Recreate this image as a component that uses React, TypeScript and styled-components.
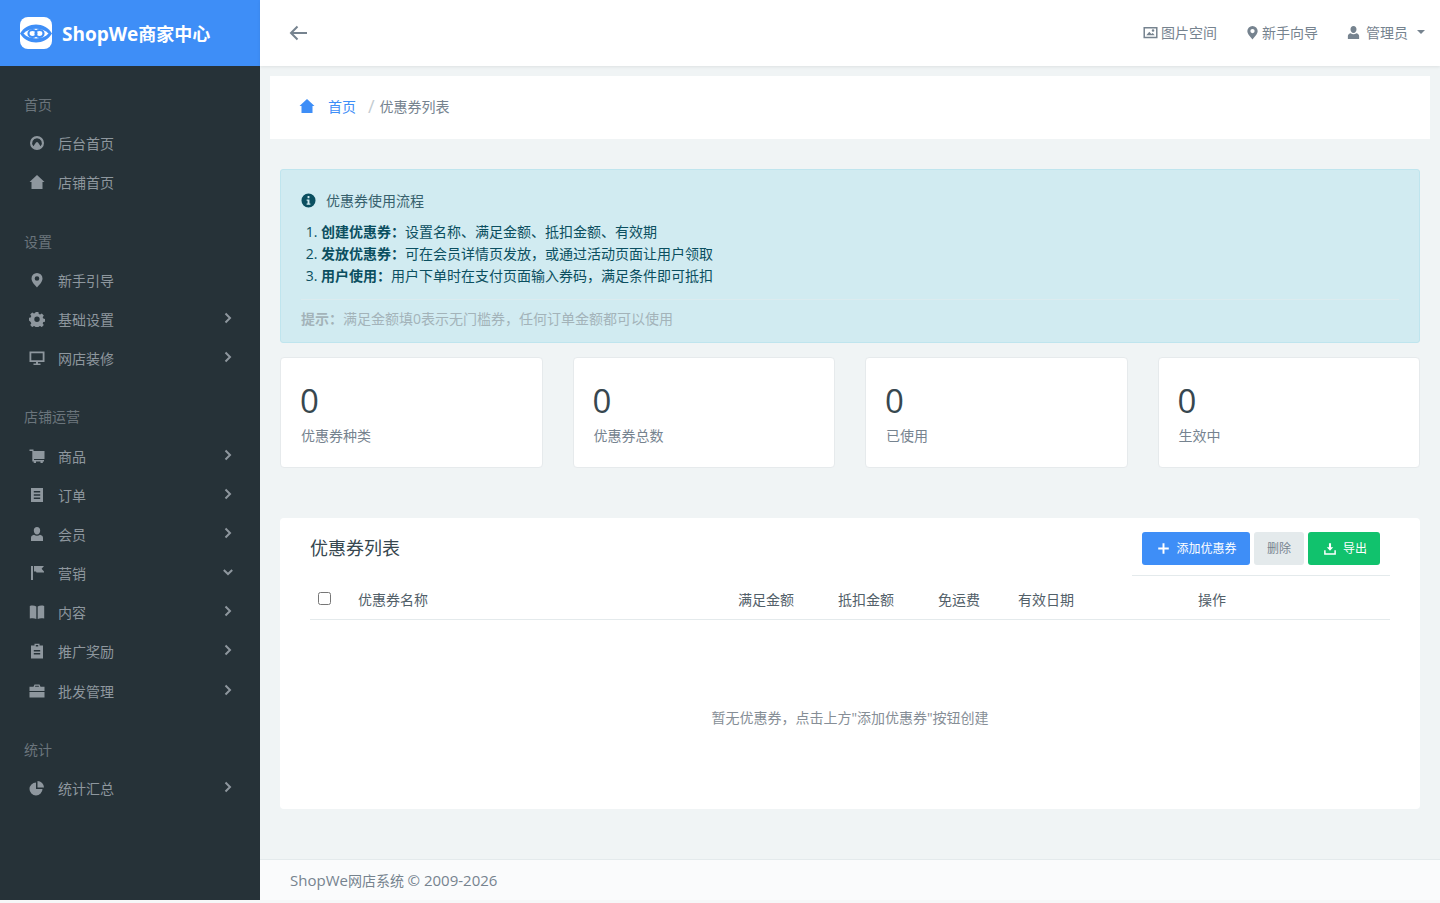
import React from 'react'
import styled, { createGlobalStyle } from 'styled-components'

const GlobalStyle = createGlobalStyle`
  html, body {
    margin: 0;
    padding: 0;
    background: #f6f7f8;
  }
  body {
    font-family: "Open Sans", "Noto Sans CJK SC", sans-serif;
    font-size: 14px;
    color: #76838f;
  }
  * {
    box-sizing: border-box;
  }
`

const Page = styled.div`
  display: flex;
  height: 900px;
`

const Sidebar = styled.aside`
  width: 260px;
  flex: none;
  background: #263238;
`

const Brand = styled.div`
  height: 66px;
  background: #3e8ef7;
  display: flex;
  align-items: center;
  padding-left: 20px;
  gap: 10px;
  color: #fff;
  font-size: 18px;
  font-weight: 700;
`

const BrandLatin = styled.span`
  font-size: 19px;
`

const Nav = styled.nav`
  padding-top: 20px;
`

const NavGroup = styled.div`
  margin-bottom: 19.6px;
`

const NavTitle = styled.div`
  height: 38.6px;
  line-height: 38.6px;
  padding-left: 24px;
  color: #6b757c;
`

const NavItem = styled.div`
  height: 39.2px;
  display: flex;
  align-items: center;
  padding: 0 0 2px 29px;
  color: #8e979e;
`

const NavIcon = styled.span`
  width: 16px;
  height: 16px;
  display: flex;
  align-items: center;
  justify-content: center;
  margin-right: 13px;
`

const NavLabel = styled.span`
  flex: 1;
`

const NavArrow = styled.span`
  width: 10px;
  margin-right: 27px;
  margin-top: -2px;
  display: flex;
`

const Main = styled.div`
  flex: 1;
  min-width: 0;
  display: flex;
  flex-direction: column;
  background: #f0f4f5;
`

const Header = styled.header`
  height: 66px;
  flex: none;
  background: #fff;
  box-shadow: 0 1px 3px rgba(0, 0, 0, 0.08);
  display: flex;
  align-items: center;
  justify-content: space-between;
  padding: 0 15px 0 29px;
  position: relative;
`

const HeaderMenu = styled.div`
  display: flex;
  align-items: center;
  padding-bottom: 2px;
`

const HeaderLink = styled.span<{ $gap: number; $space: number }>`
  display: flex;
  align-items: center;
  gap: ${({ $gap }) => $gap}px;
  margin-left: ${({ $space }) => $space}px;
`

const Caret = styled.span`
  width: 0;
  height: 0;
  margin-left: 4px;
  border-left: 4px solid transparent;
  border-right: 4px solid transparent;
  border-top: 4px solid #76838f;
`

const Crumbs = styled.div`
  height: 63px;
  flex: none;
  margin: 10px 10px 0;
  background: #fff;
  display: flex;
  align-items: center;
  padding: 0 0 3px 29px;
`

const CrumbLink = styled.span`
  color: #3e8ef7;
  margin-left: 13px;
`

const CrumbSep = styled.span`
  color: #c4ccd1;
  font-size: 18px;
  line-height: 1;
  margin: 0 5px 0 12px;
`

const Content = styled.main`
  flex: 1;
  padding: 30px 20px 0;
`

const Notice = styled.section`
  height: 174px;
  background: #d1ebf1;
  border: 1px solid #bfe5ee;
  border-radius: 3px;
  padding: 18px 20px 0;
  color: #0b4f60;
`

const NoticeHead = styled.div`
  display: flex;
  align-items: center;
  gap: 10px;
  height: 24px;
  margin-bottom: 9px;
  color: #37616d;
`

const Steps = styled.ol`
  margin: 0;
  padding: 0 0 0 20px;
  line-height: 22px;
`

const StepName = styled.b`
  font-weight: 700;
`

const NoticeRule = styled.hr`
  margin: 12px 0 0;
  border: 0;
  border-top: 1px solid #dcebef;
`

const NoticeTip = styled.div`
  margin-top: 8px;
  line-height: 22px;
  color: #a3b3b9;
`

const Stats = styled.section`
  display: grid;
  grid-template-columns: repeat(4, 1fr);
  gap: 30px;
  margin-top: 14px;
`

const StatCard = styled.div`
  height: 111px;
  background: #fff;
  border: 1px solid #e6eaec;
  border-radius: 4px;
  padding: 24px 20px 0;
`

const StatValue = styled.div`
  font-size: 33px;
  line-height: 38px;
  margin-left: -1px;
  color: #37474f;
`

const StatLabel = styled.div`
  margin-top: 5px;
  line-height: 22px;
  color: #76838f;
`

const Panel = styled.section`
  height: 291px;
  margin-top: 50px;
  background: #fff;
  border-radius: 4px;
  padding: 0 30px;
`

const PanelHead = styled.div`
  display: flex;
  justify-content: space-between;
  align-items: flex-start;
`

const PanelTitle = styled.h3`
  margin: 17px 0 0;
  font-size: 18px;
  font-weight: 400;
  line-height: 26px;
  color: #37474f;
`

const Toolbar = styled.div`
  width: 258px;
  height: 58px;
  padding: 14px 10px 0;
  border-bottom: 1px solid #e4eaec;
  display: flex;
  justify-content: flex-end;
  gap: 4px;
`

const ToolButton = styled.button<{ $tone: 'primary' | 'muted' | 'success'; $width: number }>`
  width: ${({ $width }) => $width}px;
  height: 33px;
  border: 0;
  border-radius: 3px;
  padding: 0 0 2px;
  font: inherit;
  font-size: 12px;
  display: flex;
  align-items: center;
  justify-content: center;
  gap: 6px;
  background: ${({ $tone }) =>
    $tone === 'primary' ? '#3e8ef7' : $tone === 'success' ? '#11c26d' : '#e4eaec'};
  color: ${({ $tone }) => ($tone === 'muted' ? '#76838f' : '#fff')};
`

const ButtonIcon = styled.span`
  display: flex;
  margin: 2px 0 0 2px;
`

const TableHead = styled.div`
  display: grid;
  grid-template-columns: 48px 380px 100px 100px 80px 180px 1fr;
  align-items: center;
  height: 44px;
  padding-top: 2px;
  border-bottom: 1px solid #e4eaec;
  color: #526069;
`

const Check = styled.input`
  width: 13px;
  height: 13px;
  margin: 0 0 0 8px;
`

const EmptyNote = styled.div`
  margin-top: 87px;
  text-align: center;
  line-height: 22px;
  color: #868e96;
`

const Footer = styled.footer`
  height: 42px;
  flex: none;
  margin-bottom: -1px;
  background: #fafbfc;
  border-top: 1px solid #e4eaec;
  padding-left: 30px;
  line-height: 41px;
  color: #76838f;
`

const FooterLatin = styled.span`
  font-size: 15px;
`

const Glyph = ({ d, size = 16, color = '#8e979e' }: { d: string; size?: number; color?: string }) => (
  <svg width={size} height={size} viewBox="0 0 16 16" fill={color} style={{ flex: 'none' }}>
    <path fillRule="evenodd" d={d} />
  </svg>
)

const icons = {
  gauge:
    'M8 1a7 7 0 1 1 0 14A7 7 0 0 1 8 1zm0 2.200a4.800 4.800 0 0 0-3.600 8L7 7.600c.5-.7 1.500-.7 2 0l2.600 3.600A4.800 4.800 0 0 0 8 3.200z',
  home: 'M8 1l7.500 7H13.500v7h-11V8H.5z',
  pin: 'M8 1a5.500 5.500 0 0 1 5.500 5.500C13.500 10 10 13 8 15.500 6 13 2.500 10 2.500 6.500A5.500 5.500 0 0 1 8 1zm0 3.200a2.300 2.300 0 1 0 0 4.600 2.300 2.300 0 0 0 0-4.600z',
  gear: 'M6.600 1h2.800l.4 2 1.300.6 1.700-1.100 2 2-1.100 1.700.6 1.300 1.700.4v2.800l-1.700.4-.6 1.300 1.100 1.700-2 2-1.700-1.100-1.300.6-.4 1.700H6.600l-.4-1.700-1.300-.6-1.700 1.100-2-2 1.100-1.700-.6-1.300L0 9.600V6.800l1.700-.4.600-1.300-1.100-1.700 2-2 1.700 1.100 1.300-.6zM8 5.500a2.700 2.700 0 1 0 0 5.400 2.700 2.700 0 0 0 0-5.400z',
  monitor: 'M.5 1.500h15V12H9v1.500h2.500V15h-7v-1.500H7V12H.5zm1.800 1.800v6.900h11.400V3.300z',
  cart: 'M.5 1.500h4V3H15.500v8H5v1h10v1.500h-1.200V15h-2.300v-1.500H7V15H4.700v-1.500H3.300V3H.5z',
  list: 'M2 1h12v14H2zm2.800 3v1.600h6.400V4zm0 3.200v1.600h6.400V7.200zm0 3.200V12h6.400v-1.600z',
  user: 'M8 1c2 0 3.200 1.500 3.200 3.500S10 8.500 8 8.500 4.800 6.500 4.800 4.500 6 1 8 1zM5 8.700c.8.700 1.900 1.100 3 1.100s2.200-.4 3-1.100c1.600.4 3 1.300 3 3V15H2v-3.300c0-1.700 1.400-2.600 3-3z',
  flag: 'M2 1h2v14H2zM5 1h10l-2.400 2.700L15 6.500V7.500H7.500L7 6.500H5z',
  book: 'M.8 2c2.300-.8 4.800-.6 6.500.6V15c-1.800-1-4.300-1.100-6.500-.4zm14.400 0v12.600c-2.200-.7-4.700-.6-6.500.4V2.600c1.700-1.200 4.200-1.400 6.500-.6z',
  clip: 'M5.500 .7h5v1.800h3.500v13H2v-13h3.500zm1.300 1.300v1.400h2.400V2zM4.800 7v1.400h6.400V7zm0 3.100v1.400h6.400v-1.400z',
  case: 'M5.500 1.500h5l1 2.200H15.500V8H.5V3.700H4.500zm.8 1.200L6 3.700h4l-.3-1zM.5 9h15v5.500H.5z',
  pie: 'M7 2.500V9h6.500A6.500 6.500 0 1 1 7 2.500zM8.500 1A6.500 6.500 0 0 1 15 7.500H8.500z',
  image: 'M.5 2h15v12H.5zm1.600 1.600v8.800h11.800V3.600zM3.500 11l3.200-3.800 2.200 2.500 1.500-1.300 2.100 2.600zM10.700 4.500a1.400 1.400 0 1 1 0 2.800 1.400 1.400 0 0 1 0-2.800z',
  info: 'M8 .5a7.500 7.500 0 1 1 0 15A7.500 7.500 0 0 1 8 .5zm-1 2.800v2.200h2V3.300zM6 6.800v1.400h1v2.900H6v1.300h4v-1.300H9V6.800z',
  download: 'M6.800 1.500h2.400V6h2.500L8 10 4.300 6h2.500zM1.300 9.500H3v3.300h10V9.500h1.700v5H1.300z',
  plus: 'M6.800 1.500h2.400v5.300h5.300v2.400H9.200v5.300H6.800V9.200H1.500V6.800h5.300z',
}

const Chevron = () => (
  <svg width="10" height="12" viewBox="0 0 10 12" fill="none" stroke="#8e979e" strokeWidth="2">
    <path d="M2.500 1.500 7 6l-4.500 4.500" />
  </svg>
)

const ChevronDown = () => (
  <svg width="10" height="12" viewBox="0 0 10 12" fill="none" stroke="#8e979e" strokeWidth="2">
    <path d="M.8 4 5 8l4.200-4" />
  </svg>
)

type Entry = { icon: keyof typeof icons; label: string; arrow?: 'right' | 'down' }

const menu: { title: string; items: Entry[] }[] = [
  {
    title: '首页',
    items: [
      { icon: 'gauge', label: '后台首页' },
      { icon: 'home', label: '店铺首页' },
    ],
  },
  {
    title: '设置',
    items: [
      { icon: 'pin', label: '新手引导' },
      { icon: 'gear', label: '基础设置', arrow: 'right' },
      { icon: 'monitor', label: '网店装修', arrow: 'right' },
    ],
  },
  {
    title: '店铺运营',
    items: [
      { icon: 'cart', label: '商品', arrow: 'right' },
      { icon: 'list', label: '订单', arrow: 'right' },
      { icon: 'user', label: '会员', arrow: 'right' },
      { icon: 'flag', label: '营销', arrow: 'down' },
      { icon: 'book', label: '内容', arrow: 'right' },
      { icon: 'clip', label: '推广奖励', arrow: 'right' },
      { icon: 'case', label: '批发管理', arrow: 'right' },
    ],
  },
  {
    title: '统计',
    items: [{ icon: 'pie', label: '统计汇总', arrow: 'right' }],
  },
]

const stats = ['优惠券种类', '优惠券总数', '已使用', '生效中']

const columns = ['优惠券名称', '满足金额', '抵扣金额', '免运费', '有效日期', '操作']

const Logo = () => (
  <svg width="32" height="32" viewBox="0 0 32 32" style={{ flex: 'none' }}>
    <rect width="32" height="32" rx="8" fill="#fff" />
    <path d="M0 16.500C7 4.500 25 4.500 32 16.500C25 28.500 7 28.500 0 16.500z" fill="#3e8ef7" />
    <path d="M3.500 16.500C9 10 23 10 28.500 16.500C23 23 9 23 3.500 16.500z" fill="#fff" />
    <ellipse cx="12.500" cy="16.500" rx="4" ry="3.500" fill="none" stroke="#3e8ef7" strokeWidth="2.200" />
    <ellipse cx="19.500" cy="16.500" rx="4" ry="3.500" fill="none" stroke="#3e8ef7" strokeWidth="2.200" />
  </svg>
)

export default function App() {
  return (
    <>
      <GlobalStyle />
      <Page>
        <Sidebar>
          <Brand>
            <Logo />
            <span>
              <BrandLatin>ShopWe</BrandLatin>商家中心
            </span>
          </Brand>
          <Nav>
            {menu.map((group) => (
              <NavGroup key={group.title}>
                <NavTitle>{group.title}</NavTitle>
                {group.items.map((item) => (
                  <NavItem key={item.label}>
                    <NavIcon>
                      <Glyph d={icons[item.icon]} />
                    </NavIcon>
                    <NavLabel>{item.label}</NavLabel>
                    {item.arrow && <NavArrow>{item.arrow === 'right' ? <Chevron /> : <ChevronDown />}</NavArrow>}
                  </NavItem>
                ))}
              </NavGroup>
            ))}
          </Nav>
        </Sidebar>
        <Main>
          <Header>
            <svg width="19" height="16" viewBox="0 0 19 16" fill="none" stroke="#76838f" strokeWidth="2">
              <path d="M18 8H2M8.500 1.500 2 8l6.500 6.500" />
            </svg>
            <HeaderMenu>
              <HeaderLink $gap={3} $space={0}>
                <Glyph d={icons.image} size={15} color="#76838f" />
                图片空间
              </HeaderLink>
              <HeaderLink $gap={2} $space={28}>
                <Glyph d={icons.pin} size={15} color="#76838f" />
                新手向导
              </HeaderLink>
              <HeaderLink $gap={5} $space={28}>
                <Glyph d={icons.user} size={15} color="#76838f" />
                管理员
                <Caret />
              </HeaderLink>
            </HeaderMenu>
          </Header>
          <Crumbs>
            <Glyph d={icons.home} size={16} color="#3e8ef7" />
            <CrumbLink>首页</CrumbLink>
            <CrumbSep>/</CrumbSep>
            <span>优惠券列表</span>
          </Crumbs>
          <Content>
            <Notice>
              <NoticeHead>
                <Glyph d={icons.info} size={15} color="#0b4f60" />
                优惠券使用流程
              </NoticeHead>
              <Steps>
                <li>
                  <StepName>创建优惠券：</StepName>设置名称、满足金额、抵扣金额、有效期
                </li>
                <li>
                  <StepName>发放优惠券：</StepName>可在会员详情页发放，或通过活动页面让用户领取
                </li>
                <li>
                  <StepName>用户使用：</StepName>用户下单时在支付页面输入券码，满足条件即可抵扣
                </li>
              </Steps>
              <NoticeRule />
              <NoticeTip>
                <StepName>提示：</StepName>满足金额填0表示无门槛券，任何订单金额都可以使用
              </NoticeTip>
            </Notice>
            <Stats>
              {stats.map((label) => (
                <StatCard key={label}>
                  <StatValue>0</StatValue>
                  <StatLabel>{label}</StatLabel>
                </StatCard>
              ))}
            </Stats>
            <Panel>
              <PanelHead>
                <PanelTitle>优惠券列表</PanelTitle>
                <Toolbar>
                  <ToolButton $tone="primary" $width={108}>
                    <ButtonIcon>
                      <Glyph d={icons.plus} size={13} color="#fff" />
                    </ButtonIcon>
                    添加优惠券
                  </ToolButton>
                  <ToolButton $tone="muted" $width={50}>
                    删除
                  </ToolButton>
                  <ToolButton $tone="success" $width={72}>
                    <ButtonIcon>
                      <Glyph d={icons.download} size={14} color="#fff" />
                    </ButtonIcon>
                    导出
                  </ToolButton>
                </Toolbar>
              </PanelHead>
              <TableHead>
                <Check type="checkbox" />
                {columns.map((column) => (
                  <span key={column}>{column}</span>
                ))}
              </TableHead>
              <EmptyNote>暂无优惠券，点击上方"添加优惠券"按钮创建</EmptyNote>
            </Panel>
          </Content>
          <Footer>
            <FooterLatin>ShopWe</FooterLatin>网店系统 <FooterLatin>© 2009-2026</FooterLatin>
          </Footer>
        </Main>
      </Page>
    </>
  )
}
